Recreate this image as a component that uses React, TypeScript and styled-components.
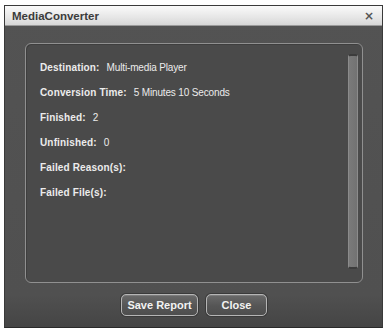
import React from 'react';
import styled, { createGlobalStyle } from 'styled-components';

const GlobalStyle = createGlobalStyle`
  html, body { margin: 0; padding: 0; background: #ffffff; }
  body { font-family: Tahoma, "Liberation Sans", Arial, sans-serif; }
`;

const Window = styled.div`
  margin: 5px 0 0 4px;
  width: 379px;
  height: 323px;
  box-sizing: border-box;
  border: 1px solid #3a3a3a;
  border-bottom-color: #2a2a2a;
  display: flex;
  flex-direction: column;
  background: linear-gradient(#535353, #505050 90%, #454545);
`;

const TitleBar = styled.div`
  height: 19px;
  flex: none;
  display: flex;
  align-items: center;
  justify-content: space-between;
  padding: 0 8px 0 7px;
  background: linear-gradient(#fafafa, #e6e6e6 60%, #d6d6d6);
  border-bottom: 1px solid #9a9a9a;
`;

const Title = styled.span`
  font: bold 11.5px "Liberation Sans", Arial, sans-serif;
  color: #3c3c3c;
`;

const CloseX = styled.span`
  font: bold 12px "DejaVu Sans", sans-serif;
  color: #555;
  line-height: 1;
`;

const Body = styled.div`
  flex: 1;
  display: flex;
  flex-direction: column;
  padding: 17px 19px 10px 20px;
`;

const Panel = styled.div`
  height: 240px;
  box-sizing: border-box;
  border: 1px solid #909090;
  border-radius: 6px;
  background: #4a4a4a;
  display: flex;
  box-shadow: inset 1px 1px 0 #3e3e3e;
`;

const Content = styled.div`
  flex: 1;
  padding: 17px 0 0 14px;
  display: flex;
  flex-direction: column;
  gap: 11px;
`;

const Row = styled.div`
  height: 14px;
  line-height: 14px;
  font-size: 10px;
  letter-spacing: -0.15px;
  font-family: "Liberation Sans", Arial, sans-serif;
  color: #ececec;
  white-space: nowrap;
`;

const Label = styled.b`
  font-weight: bold;
  letter-spacing: 0.15px;
  margin-right: 7px;
`;

const ScrollTrack = styled.div`
  width: 10px;
  flex: none;
  margin: 10px 4px 13px 0;
  display: flex;
`;

const Thumb = styled.div`
  flex: 1;
  box-sizing: border-box;
  border: 1px solid #8c8c8c;
  border-top: 2px solid #3c3c3c;
  border-bottom: 2px solid #3c3c3c;
  border-radius: 3px;
  background: linear-gradient(90deg, #7a7a7a, #727272);
`;

const Footer = styled.div`
  display: flex;
  justify-content: center;
  gap: 8px;
  margin-top: 11px;
`;

const Button = styled.button<{ w: number }>`
  width: ${(p) => p.w}px;
  height: 22px;
  box-sizing: border-box;
  border: 1px solid #b5b5b5;
  border-radius: 5px;
  background: linear-gradient(#6a6a6a, #555 55%, #4e4e4e);
  box-shadow: 0 0 0 1px #3a3a3a, inset 0 1px 0 #7c7c7c;
  color: #f2f2f2;
  font: bold 11px "Liberation Sans", Arial, sans-serif;
  padding: 0;
  cursor: pointer;
`;

const rows: [string, string][] = [
  ['Destination:', 'Multi-media Player'],
  ['Conversion Time:', '5 Minutes 10 Seconds'],
  ['Finished:', '2'],
  ['Unfinished:', '0'],
  ['Failed Reason(s):', ''],
  ['Failed File(s):', ''],
];

export default function App() {
  return (
    <>
      <GlobalStyle />
      <Window>
        <TitleBar>
          <Title>MediaConverter</Title>
          <CloseX>×</CloseX>
        </TitleBar>
        <Body>
          <Panel>
            <Content>
              {rows.map(([label, value]) => (
                <Row key={label}>
                  <Label>{label}</Label>
                  {value}
                </Row>
              ))}
            </Content>
            <ScrollTrack>
              <Thumb />
            </ScrollTrack>
          </Panel>
          <Footer>
            <Button w={77}>Save Report</Button>
            <Button w={61}>Close</Button>
          </Footer>
        </Body>
      </Window>
    </>
  );
}
